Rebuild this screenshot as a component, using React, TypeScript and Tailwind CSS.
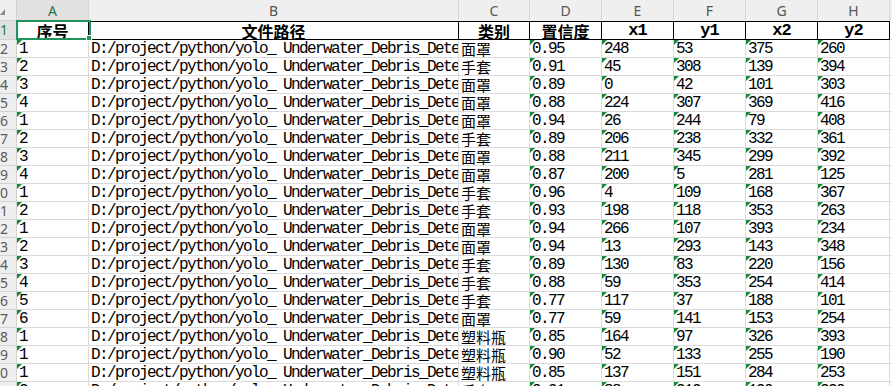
import React from 'react';

// Sheet data: 序号, 类别, 置信度, x1, y1, x2, y2
const rows: [string, string, string, string, string, string, string][] = [
  ['1', '面罩', '0.95', '248', '53', '375', '260'],
  ['2', '手套', '0.91', '45', '308', '139', '394'],
  ['3', '面罩', '0.89', '0', '42', '101', '303'],
  ['4', '面罩', '0.88', '224', '307', '369', '416'],
  ['1', '面罩', '0.94', '26', '244', '79', '408'],
  ['2', '手套', '0.89', '206', '238', '332', '361'],
  ['3', '面罩', '0.88', '211', '345', '299', '392'],
  ['4', '面罩', '0.87', '200', '5', '281', '125'],
  ['1', '手套', '0.96', '4', '109', '168', '367'],
  ['2', '手套', '0.93', '198', '118', '353', '263'],
  ['1', '面罩', '0.94', '266', '107', '393', '234'],
  ['2', '面罩', '0.94', '13', '293', '143', '348'],
  ['3', '手套', '0.89', '130', '83', '220', '156'],
  ['4', '手套', '0.88', '59', '353', '254', '414'],
  ['5', '手套', '0.77', '117', '37', '188', '101'],
  ['6', '面罩', '0.77', '59', '141', '153', '254'],
  ['1', '塑料瓶', '0.85', '164', '97', '326', '393'],
  ['1', '塑料瓶', '0.90', '52', '133', '255', '190'],
  ['1', '塑料瓶', '0.85', '137', '151', '284', '253'],
  ['2', '手套', '0.91', '88', '212', '190', '330'],
];

const PATH = 'D:/project/python/yolo_ Underwater_Debris_Detection/images/test/';

const mono = 'font-["Liberation_Mono","Noto_Sans_CJK_SC",monospace] text-[16px] tracking-[-1.6px] leading-[15px] text-black';
const cjk = 'font-["Noto_Sans_CJK_SC",sans-serif] text-[15px] leading-[17px] text-black';

function Flag() {
  // "number stored as text" indicator
  return (
    <span className="absolute top-0 left-0 w-0 h-0 border-t-[5px] border-r-[5px] border-t-[#138a3a] border-r-transparent" />
  );
}

function Cell({ w, flag, children, font = mono }: { w: string; flag?: boolean; children: React.ReactNode; font?: string }) {
  return (
    <div className={`relative shrink-0 ${w} h-full flex items-end overflow-hidden whitespace-nowrap border-r border-b border-[#dadada] pl-[2px] ${font}`}>
      {flag && <Flag />}
      {children}
    </div>
  );
}

function HeadCell({ w, children, latin }: { w: string; children: React.ReactNode; latin?: boolean }) {
  return (
    <div
      className={`shrink-0 ${w} h-full flex items-end justify-center overflow-hidden whitespace-nowrap border-r border-t border-b border-black leading-[16px] font-bold text-black ${
        latin
          ? 'font-["Liberation_Mono",monospace] text-[17px] tracking-[-1px]'
          : 'font-["Noto_Sans_CJK_SC",sans-serif] text-[16px]'
      }`}
    >
      {children}
    </div>
  );
}

function RowNum({ n, active }: { n: number; active?: boolean }) {
  return (
    <div
      className={`shrink-0 w-[17px] h-full overflow-hidden whitespace-nowrap flex items-center justify-end pr-[8px] border-r border-b border-[#d2d2d2] font-["Noto_Sans",sans-serif] text-[14px] leading-none ${
        active ? 'bg-[#e1e1e1] text-[#1f7a4d]' : 'bg-[#efefef] text-[#5a5a5a]'
      }`}
    >
      {n}
    </div>
  );
}

const letters = [
  { l: 'A', w: 'w-[72px]' },
  { l: 'B', w: 'w-[370px]' },
  { l: 'C', w: 'w-[71px]' },
  { l: 'D', w: 'w-[72px]' },
  { l: 'E', w: 'w-[72px]' },
  { l: 'F', w: 'w-[72px]' },
  { l: 'G', w: 'w-[72px]' },
  { l: 'H', w: 'w-[72px]' },
];

export default function App() {
  return (
    <div className="relative w-[892px] h-[386px] overflow-hidden bg-white">
      {/* Column letters */}
      <div className="flex h-[21px]">
        <div className="relative shrink-0 w-[17px] h-full bg-[#efefef] border-r border-b border-[#d2d2d2] overflow-hidden">
          <svg className="absolute left-0 top-[9px]" width="6" height="7" viewBox="0 0 6 7">
            <path d="M0 6 L5 6 L5 0 Z" fill="#8a8a8a" />
          </svg>
        </div>
        {letters.map((c, i) => (
          <div
            key={c.l}
            className={`shrink-0 ${c.w} h-full flex items-center justify-center border-r border-[#d7d7d7] font-["Noto_Sans",sans-serif] text-[14px] ${
              i === 0 ? 'bg-[#e1e1e1] text-[#1f7a4d]' : 'bg-[#efefef] text-[#555555]'
            }`}
          >
            {c.l}
          </div>
        ))}
        <div className="flex-1 h-full bg-[#efefef]" />
      </div>

      {/* Row 1: headers */}
      <div className="flex h-[19px]">
        <RowNum n={1} active />
        <HeadCell w="w-[72px]">序号</HeadCell>
        <HeadCell w="w-[370px]">文件路径</HeadCell>
        <HeadCell w="w-[71px]">类别</HeadCell>
        <HeadCell w="w-[72px]">置信度</HeadCell>
        <HeadCell w="w-[72px]" latin>x1</HeadCell>
        <HeadCell w="w-[72px]" latin>y1</HeadCell>
        <HeadCell w="w-[72px]" latin>x2</HeadCell>
        <HeadCell w="w-[72px]" latin>y2</HeadCell>
        <div className="flex-1 h-full border-b border-[#dadada]" />
      </div>

      {/* Data rows */}
      {rows.map((r, i) => (
        <div key={i} className="flex h-[18px]">
          <RowNum n={i + 2} />
          <Cell w="w-[72px]" flag>{r[0]}</Cell>
          <Cell w="w-[370px]">{PATH}{`${r[1]}_${i + 1}.jpg`}</Cell>
          <Cell w="w-[71px]" font={cjk}>{r[1]}</Cell>
          <Cell w="w-[72px]" flag>{r[2]}</Cell>
          <Cell w="w-[72px]" flag>{r[3]}</Cell>
          <Cell w="w-[72px]" flag>{r[4]}</Cell>
          <Cell w="w-[72px]" flag>{r[5]}</Cell>
          <Cell w="w-[72px]" flag>{r[6]}</Cell>
          <div className="flex-1 h-full border-b border-[#dadada]" />
        </div>
      ))}

      {/* Active cell A1 selection */}
      <div className="absolute left-[16px] top-[20px] w-[75px] h-[20px] border-2 border-[#21925c] pointer-events-none" />
      <div className="absolute left-[86px] top-[35px] w-[6px] h-[6px] bg-[#21925c] border border-white" />
    </div>
  );
}
